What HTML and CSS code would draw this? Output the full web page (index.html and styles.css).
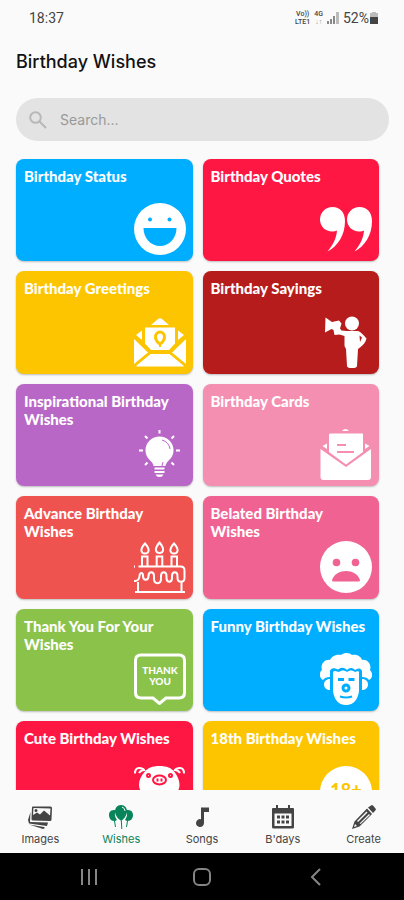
FILE: index.html
```html
<!DOCTYPE html>
<html lang="en">
<head>
<meta charset="utf-8">
<meta name="viewport" content="width=device-width, initial-scale=1">
<title>Birthday Wishes</title>
<link rel="stylesheet" href="styles.css">
</head>
<body>
<div class="status">
  <span class="clock">18:37</span>
  <div class="indicators">
    <span class="net"><span>Vo))</span><span>LTE1</span></span>
    <span class="net"><span>4G</span><span class="dim">↓↑</span></span>
    <svg class="signal" viewBox="0 0 12 12" aria-hidden="true"><path d="M0 9h2v3H0zM3 7h2v5H3zM6 4h2v8H6z"/><path class="faint" d="M9 0h3v12H9z"/></svg>
    <span class="charge">52%</span>
    <svg class="battery" viewBox="0 0 8 12" aria-hidden="true"><path class="faint" d="M2 0h4v1h2v5H0V1h2z"/><path d="M0 5h8v7H0z"/></svg>
  </div>
</div>

<header class="header">
  <h1>Birthday Wishes</h1>
  <label class="search">
    <svg viewBox="0 0 18 18" aria-hidden="true"><circle cx="6.5" cy="6.5" r="5.3"/><path d="M10.5 10.5L17 17"/></svg>
    <input type="text" placeholder="Search..." aria-label="Search">
  </label>
</header>

<main class="list">
  <a class="card blue" href="#status"><span>Birthday Status</span>
    <svg viewBox="0 0 52 52" aria-hidden="true"><circle cx="26" cy="26" r="26"/><g class="cut"><circle cx="16" cy="16.5" r="2"/><circle cx="35.5" cy="16.5" r="2"/><path d="M9.5 25h33c0 10-7 18-16.5 18S9.5 35 9.5 25z"/></g></svg></a>
  <a class="card red" href="#quotes"><span>Birthday Quotes</span>
    <svg viewBox="0 0 52 52" aria-hidden="true"><path d="M12.5 4C5.5 4 0 9.5 0 16.5S5.5 28.5 12 28.5c2 0 3.500-.3 5-1C16.500 35 13 42 7.500 48.500 18 43 25 32 25 18 25 9.500 20 4 12.500 4z"/><path d="M39.500 4C32.500 4 27 9.500 27 16.500s5.500 12 12 12c2 0 3.500-.3 5-1C43.500 35 40 42 34.500 48.500 45 43 52 32 52 18 52 9.500 47 4 39.500 4z"/></svg></a>
  <a class="card amber" href="#greetings"><span>Birthday Greetings</span>
    <svg viewBox="0 0 52 52" aria-hidden="true"><path d="M17 9L24 3q2-1.500 4 0l7 6zM11 11.500h30v16L35 34H17l-6-6.500zM8 14.500V24l-6-5zM44 14.500V24l6-5zM0 23l14 13.500L0 48zM52 23L38 36.500 52 48zM16.500 38h19L50 50q-.5.5-1.500.5h-45Q2.500 50.500 2 50z"/><g class="cutline heavy"><path d="M26 28c-3-2-4.500-4.500-4.500-7a4.500 5 0 0 1 9 0c0 2.500-1.500 5-4.500 7z"/></g><path class="cutline" d="M26 27v4"/></svg></a>
  <a class="card crimson" href="#sayings"><span>Birthday Sayings</span>
    <svg viewBox="0 0 52 52" aria-hidden="true"><circle cx="32" cy="7.500" r="7"/><path d="M5.500 1.500L12 6l7-1.500 2.500 3-1.500 5 1.500 2 5 .5h11.500c3 1 5 3.500 8.500 7.500-1 4-3 6.500-6.500 9l-2 1.500-1 17c-.5 3-9.500 3-10 0l-1-17-1.500-3V20l-5-1.500-5 .5-1-5-2-1-6.500 3.500z"/><path class="cut" d="M39.500 19.500l2.500 2-2 4.500z"/></svg></a>
  <a class="card purple" href="#inspirational"><span>Inspirational Birthday Wishes</span>
    <svg viewBox="0 0 52 52" aria-hidden="true"><path d="M25.500 8.500a14 14 0 0 1 14 14c0 6-4 9-6.500 12-1 1.500-1.500 2.500-1.500 3.500h-12c0-1-.5-2-1.500-3.500-2.500-3-6.500-6-6.500-12a14 14 0 0 1 14-14zM20.500 39.500h10v2h-10zM20.500 43h10v2h-10zM21.500 46.500h8q-1 2.500-4 2.500t-4-2.500z"/><path class="line" d="M25.500 2v3.500M5 22.500h4M42 22.500h4M11 8l2.500 2.500M40 8l-2.500 2.500M11 37l2.500-2.500M40 37l-2.500-2.500"/><path class="cutline thin" d="M28 12q7 2 8 9M29 34l-1 4"/></svg></a>
  <a class="card rose" href="#cards"><span>Birthday Cards</span>
    <svg viewBox="0 0 52 52" aria-hidden="true"><path d="M22 3q3.500-4 7 0zM10 5.500h33V24L26 36.500 9 24V7q0-1.500 1-1.500zM7 15.500V21l-4.500-3zM45 15.500V21l4.500-3zM.5 21L26 39 51 21v28q0 3-3 3H3.500q-3 0-3-3z"/><path class="cutline" d="M17 17h9M17 24h17"/></svg></a>
  <a class="card coral" href="#advance"><span>Advance Birthday Wishes</span>
    <svg viewBox="0 0 52 52" aria-hidden="true"><path class="line" d="M8 25V15.500h5.500V25M22.700 25V15.500h5.600V25M37.500 25V15.500H43V25M11 2.500c-5.500 6-4 10 0 10s5.500-4 0-10zM25.500 1.500c-5.500 6.500-4 10.500 0 10.500s5.500-4 0-10.500zM40 2.500c-5.500 6-4 10 0 10s5.500-4 0-10zM4.500 25.500h42q4 0 4 4V37c0 5-7 5-7 0v-2c0-5-5.500-5-5.500 0v2c0 5-5.500 5-5.500 0v-2c0-5-5.500-5-5.500 0v3c0 5.500-7 5.500-7 0v-3c0-5-5.500-5-5.500 0 0 5-5.500 5-5.500 0 0-4-3-4-3.500 0-.5 6-8 7-8 1v-6.500q0-4 3.500-4M4 41v10M47.500 41v10M1 51h50"/></svg></a>
  <a class="card pink" href="#belated"><span>Belated Birthday Wishes</span>
    <svg viewBox="0 0 52 52" aria-hidden="true"><circle cx="26" cy="26" r="26"/><g class="cut"><circle cx="16.500" cy="21.500" r="3.800"/><circle cx="35.500" cy="21.500" r="3.800"/><path d="M12 39c4-12 24-12 28 0q0 1.500-1.500 1.500h-25Q12 40.500 12 39z"/></g></svg></a>
  <a class="card green" href="#thanks"><span>Thank You For Your Wishes</span>
    <svg viewBox="0 0 52 52" aria-hidden="true"><path class="bubble" d="M7 2h38q5.500 0 5.500 5.500v32q0 5.500-5.500 5.500H32l-6.500 5.500L19 45H7q-5.500 0-5.500-5.500v-32Q1.500 2 7 2z"/><text class="thanks" x="26" y="21">THANK</text><text class="thanks" x="26" y="32">YOU</text></svg></a>
  <a class="card blue" href="#funny"><span>Funny Birthday Wishes</span>
    <svg viewBox="0 0 52 52" aria-hidden="true"><path d="M3 27c-4-2-4-8-1-10C0 11 5 6 10 7 12 2 18 1 21 2c4-3 9-2 11 0 4-1 9 1 10 5 5-1 10 4 8 10 3 3 3 8-1 10q-2-3-7-3v-6c-2-4-5-2-7-1-3-3-6-2-8 0-3-3-6-3-9-.5-4-2-7-2-8 1.500v6q-5 0-7 3zM13 19c2-2 4 0 6 0 3-2 5-2 8 0 3-2 5-2 8 0 2-1 4-1 4 0v19c-1 8-5 14-13 14s-12-6-13-14zM10 26v11c-8 0-8-11 0-11zM42 26v11c8 0 8-11 0-11z"/><path class="cutline heavy" d="M18 26.500h6M28.500 26.500h6"/><path class="cutline" d="M20 43.500q6 2 12 0"/><circle class="cutline heavy" cx="26" cy="35" r="3"/></svg></a>
  <a class="card red" href="#cute"><span>Cute Birthday Wishes</span>
    <svg viewBox="0 0 52 52" aria-hidden="true"><path d="M25.500 0c7 0 12 2 15 6 3 4 5 8 5 13 0 4-2 7-4 9 6 5 8 12 8 24H2c0-12 2-19 8-24-3-2-5-5-5-9 0-5 2-9 5.500-13 3-4 8-6 15-6z"/><path class="line" d="M1 7.500q0-5.500 4-5.500t5 2q-3 0-5 3M50 7.500Q50 2 46 2t-5 2q3 0 5 3"/><g class="cutline"><circle cx="14.500" cy="9.500" r="1.500"/><circle cx="36.500" cy="9.500" r="1.500"/><ellipse cx="25.500" cy="14" rx="6.500" ry="4.500"/><path d="M23.500 12.500v3M27.500 12.500v3"/></g></svg></a>
  <a class="card amber" href="#eighteen"><span>18th Birthday Wishes</span>
    <svg viewBox="0 0 52 52" aria-hidden="true"><circle cx="26" cy="26" r="26"/><text class="age" x="26" y="31">18+</text></svg></a>
</main>

<nav class="tabs" aria-label="Main">
  <a href="#images"><svg viewBox="0 0 24 24" aria-hidden="true"><path fill-rule="evenodd" d="M5 1.500h17.500q1.500 0 1.500 1.500l-.5 11.500q0 1.500-1.500 1.500l-17-.5Q3.500 15.500 3.500 14L4 2.500q0-1 1-1zM5.500 3L5 10l4-2.500 3 2 4-4 6 5 .5-7zM8 4a1.500 1.500 0 1 1 0 3 1.500 1.500 0 0 1 0-3z"/><path d="M2.500 7L2 17l18 .5-1 3.500L1 18.500 0 15zM1 19.500l15 2.500 1 1-2 1z"/></svg>Images</a>
  <a class="active" href="#wishes"><svg viewBox="0 0 24 24" aria-hidden="true"><path d="M5 5c-4 0-5 3-5 5 0 3 2 6 5 6l1 6h1l-1-6 2-1C6 12 5 9 7 5zM19 5c4 0 5 3 5 5 0 3-2 6-5 6l-1 6h-1l1-6-2-1c2-3 3-6 1-10z"/><path d="M12 0c4 0 6 3 6 6.500S15 14 12.800 15.500l.5 8.500h-1l-.5-8.500C9 14 6 10 6 6.500S8 0 12 0z"/><path class="shine" d="M13 2q3 1 3 4"/></svg>Wishes</a>
  <a href="#songs"><svg viewBox="0 0 24 24" aria-hidden="true"><path d="M11 2.500h8V7h-5v11a4 4 0 1 1-3-3.800z"/></svg>Songs</a>
  <a href="#bdays"><svg viewBox="0 0 24 24" aria-hidden="true"><path fill-rule="evenodd" d="M5 0h2v3h10V0h2v3h3q1 0 1 1v18q0 1.500-1.500 1.500h-19Q1 23.500 1 22V4q0-1 1-1h3zM3.500 8.500V21h17V8.500z"/><path d="M6 10.500h3v3H6zM10.500 10.500h3v3h-3zM15 10.500h3v3h-3zM6 15.500h3v3H6zM10.500 15.500h3v3h-3zM15 15.500h3v3h-3z"/></svg>B'days</a>
  <a href="#create"><svg viewBox="0 0 24 24" aria-hidden="true"><path fill-rule="evenodd" d="M19 .5q1-.8 2 0l2.500 3q.8 1-.2 2L21 8l-5-5.500zM15 3.500L20 9 7.500 21.500 0 24l2.500-7.500zM14.500 6.500L5 16l1 1 9.500-9.500zM17 9l-9.500 9.500 1 .5L18 10zM3 19l-1 3 3-1z"/></svg>Create</a>
</nav>

<div class="system">
  <button type="button" aria-label="Recent apps"><svg viewBox="0 0 20 20"><path d="M3 2v16M10 2v16M17 2v16"/></svg></button>
  <button type="button" aria-label="Home"><svg viewBox="0 0 20 20"><rect x="2" y="2" width="16" height="16" rx="5"/></svg></button>
  <button type="button" aria-label="Back"><svg viewBox="0 0 20 20"><path d="M15 2l-8 8 8 8"/></svg></button>
</div>
</body>
</html>
```
FILE: styles.css
```css
* { box-sizing: border-box; }

body {
  margin: 0;
  height: 100vh;
  display: flex;
  flex-direction: column;
  overflow: hidden;
  background: #fafafa;
  color: #111;
  font-family: Inter, "Liberation Sans", sans-serif;
}

a { color: inherit; text-decoration: none; }

.status {
  display: flex;
  justify-content: space-between;
  align-items: center;
  height: 36px;
  padding: 0 26px 0 29px;
  font: 14px/18px Roboto, sans-serif;
  color: #444;
}

.indicators { display: flex; align-items: center; gap: 4px; }
.net {
  display: flex;
  flex-direction: column;
  align-items: center;
  font-size: 7px;
  line-height: 8px;
  font-weight: 500;
}
.dim { color: #999; }
.status svg { height: 12px; fill: #666; }
.status .signal { width: 12px; fill: #888; }
.battery { width: 8px; }
.status .faint { fill: #bbb; }
.status .battery { margin-left: -3px; fill: #444; }

.header { padding: 14px 15px 0 16px; }
.header h1 {
  margin: 0;
  font-size: 18px;
  line-height: 24px;
  font-weight: 500;
}

.search {
  display: flex;
  align-items: center;
  gap: 13px;
  height: 43px;
  margin-top: 24px;
  padding: 0 13px;
  border-radius: 22px;
  background: #e3e3e3;
}
.search svg {
  width: 18px;
  height: 18px;
  fill: none;
  stroke: #b8b8b8;
  stroke-width: 2;
}
.search input {
  flex: 1;
  min-width: 0;
  padding: 0;
  border: 0;
  outline: 0;
  background: none;
  font: 14px/20px Inter, sans-serif;
}
.search input::placeholder { color: #999; opacity: 1; }

.list {
  flex: 1;
  min-height: 0;
  overflow: hidden;
  display: grid;
  grid-template-columns: 1fr 1fr;
  align-content: start;
  gap: 10px;
  margin-top: 14px;
  padding: 4px 25px 0 16px;
}

.card {
  --tone: #00aeff;
  display: flex;
  flex-direction: column;
  justify-content: space-between;
  aspect-ratio: 31 / 18;
  padding: 8px 7px 6px 8px;
  border-radius: 8px;
  background: var(--tone);
  box-shadow: 0 1px 2px rgba(0, 0, 0, 0.25);
  color: #fff;
  font: 900 15px/18px Lato, sans-serif;
}
.blue { --tone: #00aeff; }
.red { --tone: #ff1744; }
.amber { --tone: #fdc500; }
.crimson { --tone: #b71c1c; }
.purple { --tone: #b967c7; }
.rose { --tone: #f48fb1; }
.coral { --tone: #ef5350; }
.pink { --tone: #f06292; }
.green { --tone: #8bc34a; }

.card svg {
  flex: none;
  align-self: flex-end;
  width: 52px;
  height: 52px;
  fill: #fff;
}
.card .cut { fill: var(--tone); }
.card .cutline { fill: none; stroke: var(--tone); stroke-width: 2; }
.card .thin { stroke-width: 1; }
.card .line { fill: none; stroke: #fff; stroke-width: 2; }
.card .heavy { stroke-width: 3; }
.card .bubble { fill: none; stroke: #fff; stroke-width: 3; }
.thanks { font: 900 10px Lato, sans-serif; text-anchor: middle; }
.age { font: 900 18px Lato, sans-serif; text-anchor: middle; fill: var(--tone); }

.tabs {
  display: grid;
  grid-template-columns: repeat(5, 1fr);
  height: 63px;
  padding-top: 15px;
}
.tabs a {
  display: flex;
  flex-direction: column;
  align-items: center;
  gap: 2px;
  font-size: 11px;
  line-height: 16px;
  color: #444;
}
.tabs svg { width: 24px; height: 24px; fill: currentColor; }
.tabs .active { color: #07845a; }
.shine { fill: none; stroke: #fafafa; stroke-width: 1; }

.system {
  display: grid;
  grid-template-columns: repeat(3, 1fr);
  height: 47px;
  padding: 0 32px;
  background: #000;
}
.system button {
  display: grid;
  place-items: center;
  padding: 0;
  border: 0;
  background: none;
}
.system svg {
  width: 20px;
  height: 20px;
  fill: none;
  stroke: #858585;
  stroke-width: 2;
}
```
